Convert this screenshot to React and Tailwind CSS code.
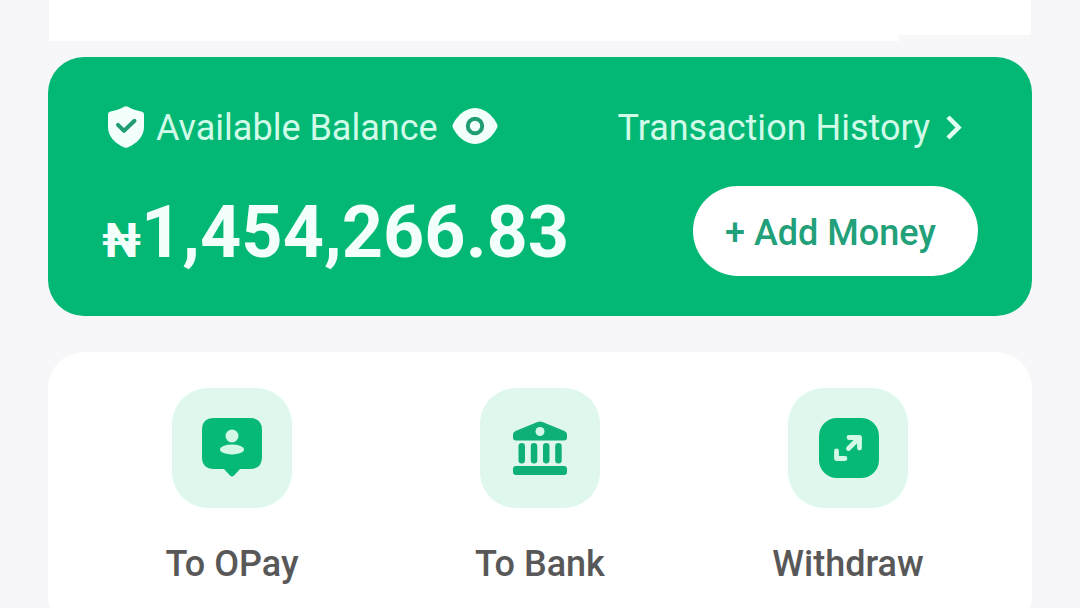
import React from 'react';

const ShieldIcon = () => (
  <svg className="w-[38px] h-11 shrink-0" viewBox="0 0 38 44" fill="none" aria-hidden="true">
    <path d="M18 0.8Q20 -0.4 22 0.8C26 3.2 31 4.8 35.5 5.4Q38 5.8 38 8.4V21C38 31 30.5 37.6 21.6 41.5Q20 42.2 18.4 41.5C9.5 37.6 2 31 2 21V8.4Q2 5.8 4.5 5.4C9 4.8 14 3.2 18 0.8Z" fill="#f2fffb" />
    <path d="M12 18.8L18 24.8L28.5 14.8" stroke="#1f9c74" strokeWidth="4" strokeLinecap="round" strokeLinejoin="round" />
  </svg>
);

const EyeIcon = () => (
  <svg className="w-[46px] h-10" viewBox="0 0 46 40" fill="none" aria-hidden="true">
    <path d="M0.5 18C0.5 15 9.5 0 23 0S45.5 15 45.5 18S36.5 36 23 36S0.5 21 0.5 18Z" fill="#f2fffb" />
    <circle cx="23" cy="18" r="7.2" fill="#f2fffb" stroke="#1f9c74" strokeWidth="4" />
  </svg>
);

const ChevronIcon = () => (
  <svg className="w-4 h-6" viewBox="0 0 16 24" fill="none" aria-hidden="true">
    <path d="M2 1L12.5 11.5L2 22" stroke="#e2fff3" strokeWidth="4.5" />
  </svg>
);

const OPayIcon = () => (
  <svg className="w-[60px] h-[60px]" viewBox="0 0 60 60" aria-hidden="true">
    <path d="M12 0H48Q60 0 60 12V39Q60 51 48 51H38L32 57.5Q30 59.5 28 57.5L22 51H12Q0 51 0 39V12Q0 0 12 0Z" fill="#06b977" />
    <circle cx="30" cy="18" r="6.5" fill="#d3f8e7" />
    <ellipse cx="30" cy="31.5" rx="12" ry="5" fill="#d3f8e7" />
  </svg>
);

const BankIcon = () => (
  <svg className="w-[60px] h-[60px]" viewBox="0 0 60 60" fill="#0fb078" aria-hidden="true">
    <path d="M27.5 4Q30 2.8 32.5 4L54.5 13Q57 14.2 57 16.5V19.5Q57 22.5 54 22.5H6Q3 22.5 3 19.5V16.5Q3 14.2 5.5 13Z" />
    <circle cx="30" cy="13.5" r="4.5" fill="#d3f8e7" />
    <rect x="8.5" y="25" width="6.5" height="20.5" rx="3.2" />
    <rect x="20.8" y="25" width="6.5" height="20.5" rx="3.2" />
    <rect x="33" y="25" width="6.5" height="20.5" rx="3.2" />
    <rect x="45.2" y="25" width="6.5" height="20.5" rx="3.2" />
    <rect x="3" y="48" width="54" height="9" rx="3" />
  </svg>
);

const WithdrawIcon = () => (
  <svg className="w-[62px] h-[60px]" viewBox="0 0 62 60" fill="none" aria-hidden="true">
    <rect x="2" width="60" height="60" rx="18" fill="#06b977" />
    <g stroke="#d3f8e7" strokeWidth="4.8" strokeLinecap="round" strokeLinejoin="round">
      <path d="M32 19.5H42.5V30" />
      <path d="M42 20L31.5 30.5" />
      <path d="M19.5 33V40.5H28" />
    </g>
  </svg>
);

const actions = [
  { label: 'To OPay', icon: OPayIcon },
  { label: 'To Bank', icon: BankIcon },
  { label: 'Withdraw', icon: WithdrawIcon },
];

const App = () => {
  return (
    <main className="h-screen overflow-hidden bg-[#f7f7fa] px-12 font-['Roboto',sans-serif]">
      {/* Bottom edge of the header panel */}
      <div className="flex items-start h-[57px] px-px">
        <div className="flex-1 h-[41px] bg-white" />
        <div className="w-[132px] h-[35px] bg-white" />
      </div>

      {/* Balance card */}
      <section className="rounded-[36px] bg-[#03b875] pl-[58px] pr-[54px] pt-[49px] pb-10">
        <div className="flex items-center justify-between h-11 text-4xl text-[#d0fbe9]">
          <div className="flex items-center">
            <ShieldIcon />
            <h2 className="ml-3">Available Balance</h2>
            <button type="button" aria-label="Hide balance" className="ml-3.5">
              <EyeIcon />
            </button>
          </div>
          <a href="#history" className="flex items-center gap-4 mr-4">
            Transaction History
            <ChevronIcon />
          </a>
        </div>

        <div className="flex items-center justify-between mt-9">
          <p className="-ml-1 pt-1 flex items-baseline font-bold text-7xl text-[#f2fffb]">
            <span className="text-5xl">₦</span>
            <span>1,454,266.83</span>
          </p>
          <button type="button" className="h-[90px] rounded-full bg-white pl-8 pr-[42px] pt-1 text-4xl font-medium text-[#22a079]">
            + Add Money
          </button>
        </div>
      </section>

      {/* Quick actions */}
      <section className="mt-9 rounded-[36px] bg-white px-[30px] pt-9 pb-12 grid grid-cols-3">
        {actions.map(({ label, icon: Icon }) => (
          <button key={label} type="button" className="flex flex-col items-center gap-9">
            <span className="flex items-center justify-center w-[120px] h-[120px] rounded-[36px] bg-[#dff7ec]">
              <Icon />
            </span>
            <span className="text-4xl font-medium text-[#585858]">{label}</span>
          </button>
        ))}
      </section>
    </main>
  );
};

export default App;
